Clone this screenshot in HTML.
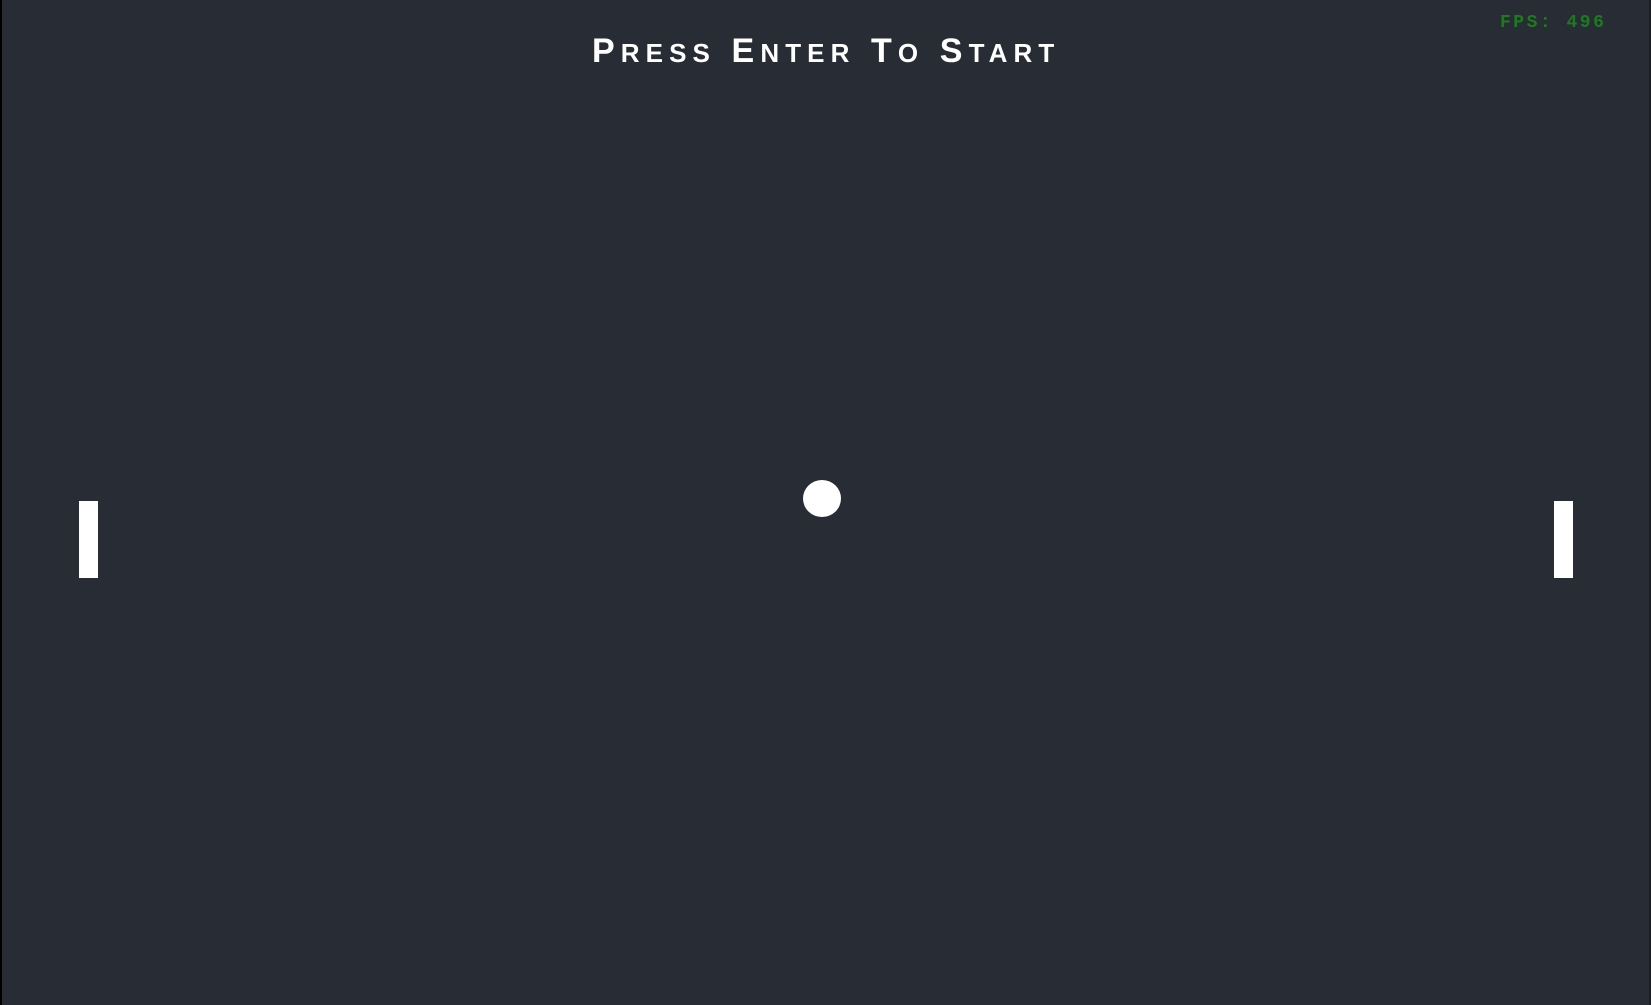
<!DOCTYPE html>
<html><head><meta charset="utf-8"><style>
html,body{margin:0;padding:0;width:1651px;height:1005px;overflow:hidden;background:#282c34;}
.l{position:absolute;left:0;top:0;width:2px;height:1005px;background:#000;}
.r{position:absolute;right:0;top:0;width:2px;height:1005px;background:#1a1d22;}
.t{position:absolute;left:592px;top:34px;font-family:"Liberation Sans",sans-serif;font-weight:bold;font-size:34px;line-height:34px;letter-spacing:6.1px;color:#fff;white-space:nowrap;}
.t span{font-size:26px;}
.f{position:absolute;left:1500px;top:14px;font-family:"Liberation Mono",monospace;font-weight:bold;font-size:18px;line-height:18px;letter-spacing:2.5px;color:#1e7a1e;white-space:nowrap;}
.p{position:absolute;top:501px;width:19px;height:77px;background:#fff;}
.b{position:absolute;left:803px;top:480px;width:38px;height:37px;border-radius:50%;background:#fff;}
</style></head><body>
<div class="l"></div><div class="r"></div>
<div class="t">P<span>RESS</span> E<span>NTER</span> T<span>O</span> S<span>TART</span></div>
<div class="f">FPS: 496</div>
<div class="p" style="left:79px"></div>
<div class="p" style="left:1554px"></div>
<div class="b"></div>
</body></html>
